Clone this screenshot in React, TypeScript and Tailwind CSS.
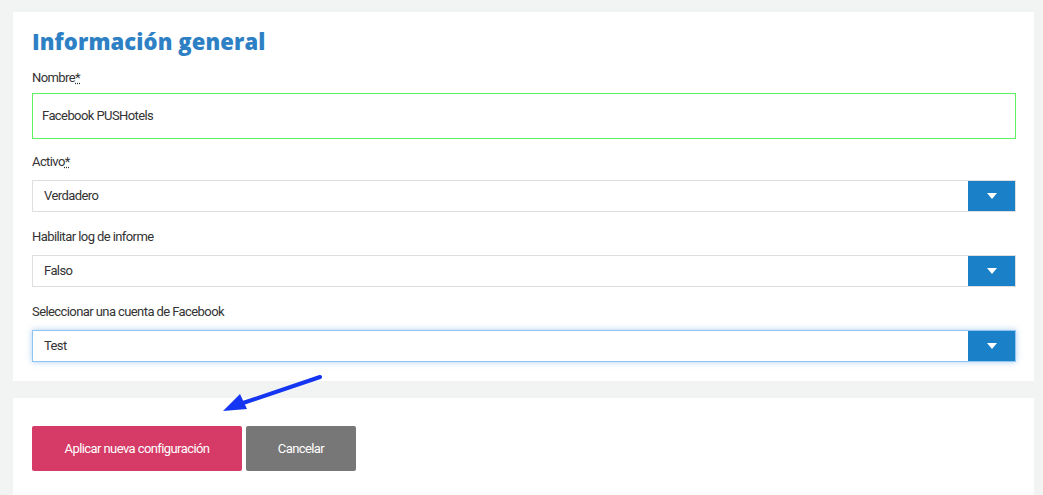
import React from 'react';

const labelCls = "text-[13px] text-[#333] leading-none tracking-[-0.045em]";

const Caret = () => (
  <svg width="10" height="6" viewBox="0 0 10 6">
    <path d="M0 0 L10 0 L5 6 Z" fill="#fff" />
  </svg>
);

interface SelectProps {
  value: string;
  focused?: boolean;
}

const SelectBox: React.FC<SelectProps> = ({ value, focused }) => (
  <div
    className={
      "flex h-[32px] w-full border " +
      (focused ? "border-[#8fc3f0] shadow-[0_0_6px_rgba(90,160,230,0.5)]" : "border-[#dedede]")
    }
  >
    <div className="flex-1 flex items-center pl-[11px] text-[13px] text-[#333] tracking-[-0.045em]">{value}</div>
    <div className="w-[47px] bg-[#1a80c8] flex items-center justify-center">
      <Caret />
    </div>
  </div>
);

const App: React.FC = () => {
  return (
    <div
      className="relative w-[1043px] h-[495px] bg-[#f2f3f3] overflow-hidden pt-[12px] pl-[13px]"
      style={{ fontFamily: 'Roboto, "Liberation Sans", sans-serif' }}
    >
      <div className="w-[1021px] bg-white pl-[19px] pr-[18px] pt-[18px] pb-[19px]">
        <h2
          className="text-[22px] font-extrabold text-[#2e80c4] leading-none tracking-[0.005em]"
          style={{ fontFamily: '"Open Sans", sans-serif' }}
        >
          Información general
        </h2>
        <div className="mt-[19px]">
          <div className={labelCls}>
            Nombre<span className="underline decoration-dotted">*</span>
          </div>
          <div className="mt-[9px] h-[46px] border border-[#5ef25e] flex items-center pl-[9px] text-[13px] text-[#333] tracking-[-0.045em]">
            Facebook PUSHotels
          </div>
        </div>
        <div className="mt-[16px]">
          <div className={labelCls}>
            Activo<span className="underline decoration-dotted">*</span>
          </div>
          <div className="mt-[12px]">
            <SelectBox value="Verdadero" />
          </div>
        </div>
        <div className="mt-[18px]">
          <div className={labelCls}>Habilitar log de informe</div>
          <div className="mt-[12px]">
            <SelectBox value="Falso" />
          </div>
        </div>
        <div className="mt-[18px]">
          <div className={labelCls}>Seleccionar una cuenta de Facebook</div>
          <div className="mt-[12px]">
            <SelectBox value="Test" focused />
          </div>
        </div>
      </div>

      <div className="mt-[17px] w-[1021px] h-[100px] bg-white pl-[19px] pt-[28px] shadow-[inset_0_-10px_10px_-8px_rgba(0,0,0,0.04)]">
        <div className="flex gap-[4px]">
          <button className="w-[210px] h-[45px] bg-[#d63a66] rounded-[2px] text-white text-[13px] tracking-[-0.045em]">
            Aplicar nueva configuración
          </button>
          <button className="w-[110px] h-[45px] bg-[#777777] rounded-[2px] text-white text-[13px] tracking-[-0.045em]">
            Cancelar
          </button>
        </div>
      </div>

      <svg className="absolute left-0 top-0 pointer-events-none" width="1043" height="495">
        <line x1="320" y1="377" x2="243" y2="403" stroke="#1436f2" strokeWidth="4" strokeLinecap="round" />
        <path d="M223 411 L240 394 L247 409 Z" fill="#1436f2" />
      </svg>
    </div>
  );
};

export default App;
